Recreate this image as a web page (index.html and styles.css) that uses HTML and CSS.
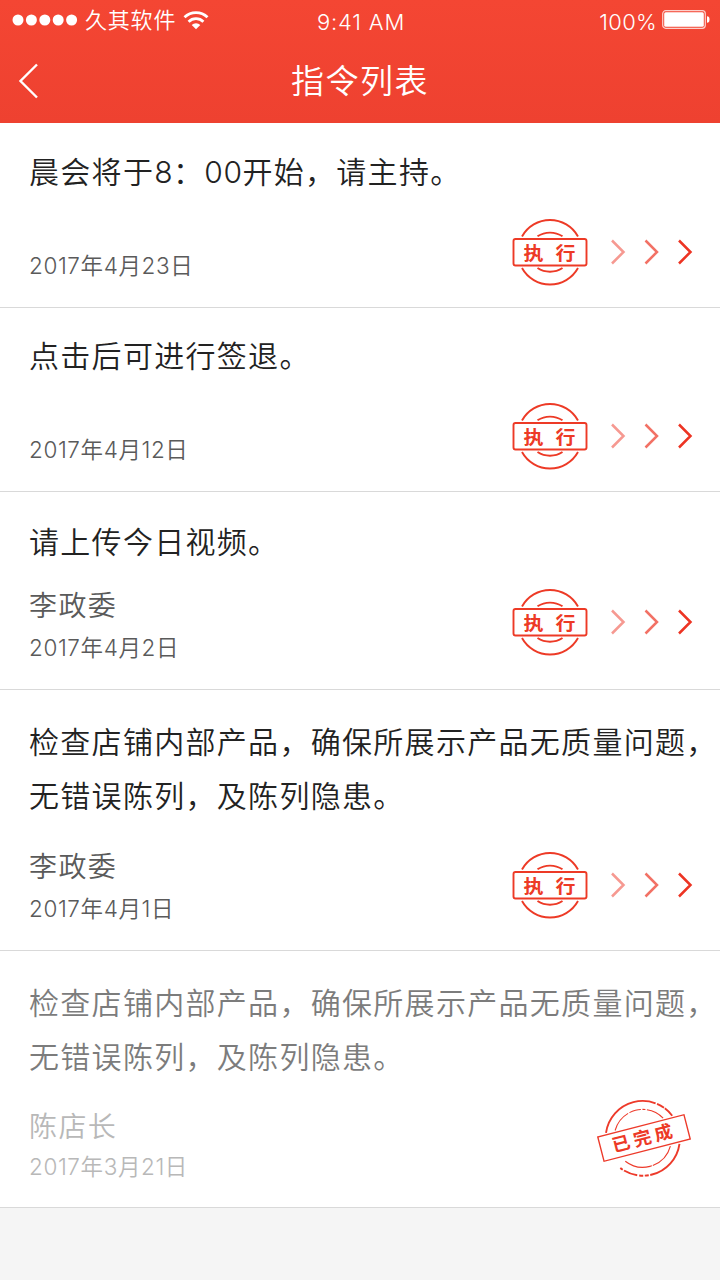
FILE: index.html
```html
<!DOCTYPE html>
<html lang="zh-CN">
<head>
<meta charset="utf-8">
<title>指令列表</title>
<link rel="stylesheet" href="styles.css">
</head>
<body>
<svg class="defs" width="0" height="0" aria-hidden="true">
  <symbol id="execute" viewBox="0 0 190 70">
    <g fill="none" stroke="#ed3a26" stroke-width="1.900">
      <path d="M12 19.500A32 32 0 0 1 68 19.500M12 51A32 32 0 0 0 68 51"/>
      <path d="M27.500 19.300A23 23 0 0 1 52.500 19.300M27.500 51A23 23 0 0 0 52.500 51"/>
      <rect x="3.500" y="22" width="73" height="26.500" rx="2"/>
    </g>
    <g transform="translate(0 42.700) scale(1 .92)">
      <text class="stamp-text" x="13.500" y="0">执</text>
      <text class="stamp-text" x="45.500" y="0">行</text>
    </g>
    <g fill="none" stroke="#ed3423" stroke-width="2.500">
      <path opacity=".5" d="M102 23.500L113.500 35L102 46.500"/>
      <path opacity=".7" d="M135.500 23.500L147 35L135.500 46.500"/>
      <path d="M169 23.500L180.500 35L169 46.500"/>
    </g>
  </symbol>
</svg>
<header class="header">
  <div class="status">
    <div class="carrier">
      <svg width="66" height="12" viewBox="0 0 66 12" fill="#fff"><circle cx="6" cy="6" r="5.500"/><circle cx="19.400" cy="6" r="5.500"/><circle cx="32.800" cy="6" r="5.500"/><circle cx="46.200" cy="6" r="5.500"/><circle cx="59.600" cy="6" r="5.500"/></svg>
      <span class="carrier-name">久其软件</span>
      <svg class="wifi" width="26" height="19" viewBox="0 0 26 19"><g fill="none" stroke="#fff" stroke-width="2.800"><path d="M1.500 6.300A16.500 16.500 0 0 1 24.500 6.300"/><path d="M5.600 10.700A10.600 10.600 0 0 1 20.400 10.700"/></g><path fill="#fff" d="M8.700 14A6 6 0 0 1 17.300 14L13 18.200Z"/></svg>
    </div>
    <span class="time">9:41 AM</span>
    <div class="power">
      <span>100%</span>
      <svg width="48" height="20" viewBox="0 0 48 20"><rect x=".7" y=".7" width="42.600" height="17.600" rx="3" fill="none" stroke="#fff" stroke-opacity=".75" stroke-width="1.200"/><rect x="2.200" y="2.200" width="39.600" height="14.600" rx="1.500" fill="#fff"/><path fill="#fff" d="M45 6.300Q47.500 6.300 47.500 9.500Q47.500 12.700 45 12.700Z"/></svg>
    </div>
  </div>
  <nav class="nav">
    <svg class="back" width="22" height="36" viewBox="0 0 22 36"><path d="M19 1.500L2.500 18L19 34.500" fill="none" stroke="#fff" stroke-width="2.400"/></svg>
    <h1 class="nav-title">指令列表</h1>
  </nav>
</header>
<main class="list">
  <article class="item item-first">
    <h2 class="title">晨会将于<span class="num">8</span>：<span class="num">00</span>开始，请主持。</h2>
    <div class="foot"><div class="meta"><p class="date">2017年4月23日</p></div><svg class="action"><use href="#execute"/></svg></div>
  </article>
  <article class="item item-short">
    <h2 class="title">点击后可进行签退。</h2>
    <div class="foot"><div class="meta"><p class="date">2017年4月12日</p></div><svg class="action"><use href="#execute"/></svg></div>
  </article>
  <article class="item item-signed">
    <h2 class="title">请上传今日视频。</h2>
    <div class="foot"><div class="meta"><p class="name">李政委</p><p class="date">2017年4月2日</p></div><svg class="action"><use href="#execute"/></svg></div>
  </article>
  <article class="item item-long">
    <h2 class="title">检查店铺内部产品，确保所展示产品无质量问题，<br>无错误陈列，及陈列隐患。</h2>
    <div class="foot"><div class="meta"><p class="name">李政委</p><p class="date">2017年4月1日</p></div><svg class="action"><use href="#execute"/></svg></div>
  </article>
  <article class="item item-done">
    <h2 class="title">检查店铺内部产品，确保所展示产品无质量问题，<br>无错误陈列，及陈列隐患。</h2>
    <div class="foot">
      <div class="meta"><p class="name">陈店长</p><p class="date">2017年3月21日</p></div>
      <svg class="done-stamp" width="100" height="84" viewBox="0 0 100 84">
        <g transform="rotate(-14.500 50 42)" fill="none" stroke="#ed3a2a">
          <path stroke-width="1.900" stroke-dasharray="66 1.500 8 1 40" d="M14.500 27.500A37 37 0 0 1 82.900 27.500"/>
          <path stroke-width="1.900" stroke-dasharray="0 10 3 1.500 14 2 4 1.500 4 1.500 60" d="M14.500 56.500A37 37 0 0 0 82.900 56.500"/>
          <path stroke-width="1.100" stroke-dasharray="22 1.500 12 1.500 3 1.500 30" d="M23.900 27.500A28.500 28.500 0 0 1 73.500 27.500"/>
          <path stroke-width="1.100" stroke-dasharray="0 4 28 1 40" d="M23.900 56.500A28.500 28.500 0 0 0 73.500 56.500"/>
          <rect x="5.500" y="29.500" width="89" height="25" stroke-width="1.400"/>
          <text class="done-text" x="17.500" y="48.300">已完成</text>
        </g>
      </svg>
    </div>
  </article>
</main>
</body>
</html>
```
FILE: styles.css
```css
* { box-sizing: border-box; }
body {
  margin: 0;
  width: 720px;
  min-height: 1280px;
  background: #f5f5f5;
  font-family: Inter, "Noto Sans CJK SC", sans-serif;
  font-weight: 350;
  overflow: hidden;
}
h1, h2, p { margin: 0; font-weight: 350; }
svg { display: block; flex: none; }
.defs { position: absolute; }
.header {
  height: 123px;
  color: #fff;
  background: linear-gradient(#f44633, #ee4130);
}
.status {
  display: grid;
  grid-template-columns: 1fr auto 1fr;
  align-items: center;
  height: 40px;
  padding: 0 10px 0 12px;
  font-size: 22px;
}
.carrier { display: flex; align-items: center; }
.carrier-name { margin-left: 7px; letter-spacing: .8px; line-height: 40px; }
.wifi { margin-left: 7px; }
.time { letter-spacing: .8px; padding-top: 3px; }
.power { display: flex; justify-content: flex-end; align-items: center; gap: 5px; }
.power span { padding-top: 3px; letter-spacing: .3px; }
.nav {
  display: grid;
  grid-template-columns: 100px 1fr 100px;
  align-items: center;
  height: 82px;
}
.back { margin-left: 18px; }
.nav-title { text-align: center; font-size: 33px; letter-spacing: 1.5px; line-height: 50px; }
.item {
  display: flex;
  flex-direction: column;
  justify-content: space-between;
  padding: 22px 0 20px 29px;
  border-bottom: 1px solid #d9d9d9;
  background: #fff;
  color: #222;
}
.item-first { height: 185px; }
.item-short { height: 184px; padding-top: 21px; }
.item-signed { height: 198px; padding-top: 23px; }
.item-long { height: 261px; padding-top: 25px; }
.item-done { height: 257px; padding-top: 25px; color: #7c7c7c; }
.title { font-size: 30px; line-height: 54px; letter-spacing: 1.3px; white-space: nowrap; }
.num { font-weight: 300; letter-spacing: .5px; }
.foot { display: flex; justify-content: space-between; align-items: flex-end; }
.meta { color: #5a5a5a; }
.name { padding-top: 1px; font-size: 28px; line-height: 41px; letter-spacing: 1.4px; }
.date { font-size: 22.5px; line-height: 42px; letter-spacing: .6px; font-weight: 350; }
.action { width: 190px; height: 70px; margin-right: 20px; }
.item-signed .action { margin-bottom: 12px; }
.item-long .action { margin-bottom: 10px; }
.item-done .meta { color: #b8b8b8; }
.item-done .name, .item-done .date { line-height: 40px; }
.done-stamp { margin: 0 26px 7px 0; }
.stamp-text, .done-text { font-family: "Noto Sans CJK SC", sans-serif; font-weight: 700; fill: #ed3a26; stroke: none; }
.stamp-text { font-size: 20px; }
.done-text { font-size: 18px; letter-spacing: 3.800px; }
```
